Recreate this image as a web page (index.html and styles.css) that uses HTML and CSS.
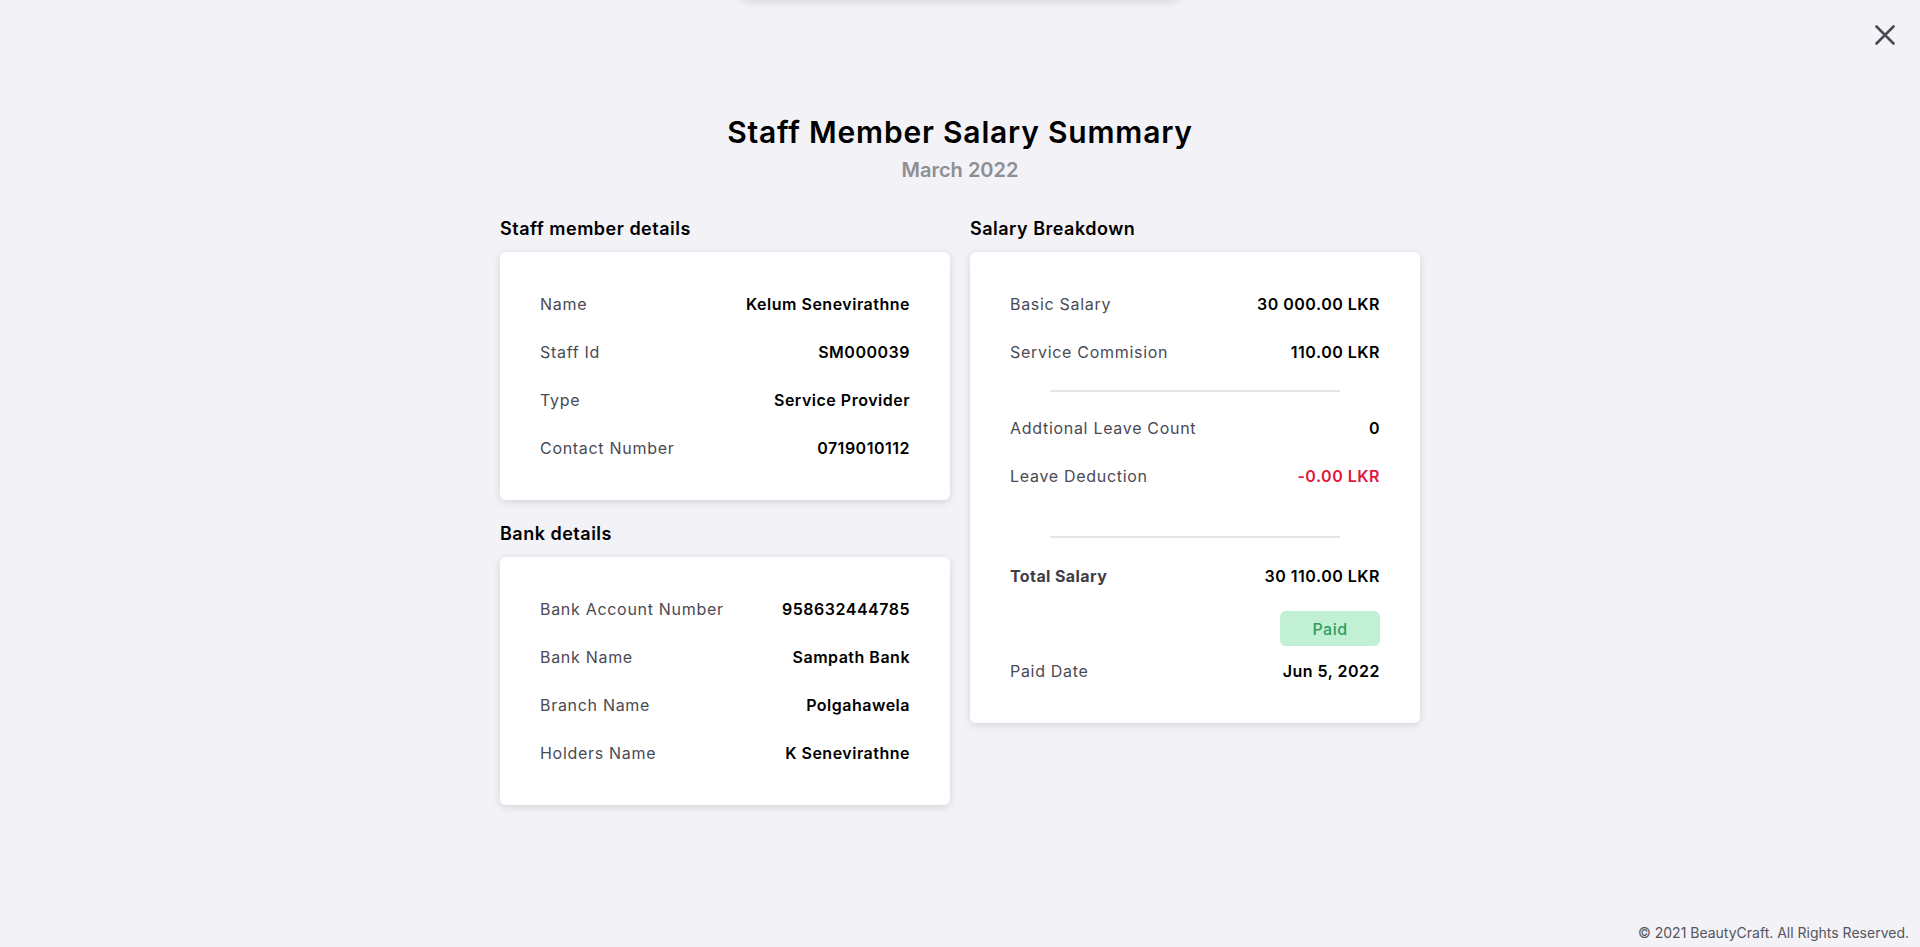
FILE: index.html
```html
<!DOCTYPE html>
<html lang="en">
<head>
<meta charset="utf-8">
<title>Staff Member Salary Summary</title>
<link rel="stylesheet" href="styles.css">
</head>
<body>
<div class="page">
  <div class="toast-shadow"></div>
  <button class="close" aria-label="Close">
    <svg width="20" height="20" viewBox="0 0 20 20"><path d="M1.5 1.5 L18.5 18.5 M18.5 1.5 L1.5 18.5" stroke="#4a4a55" stroke-width="2.6" stroke-linecap="round" fill="none"/></svg>
  </button>
  <main class="main">
    <h1 class="title">Staff Member Salary Summary</h1>
    <div class="subtitle">March 2022</div>
    <div class="columns">
      <div class="col">
        <h2 class="section-title">Staff member details</h2>
        <div class="card">
          <div class="row"><span class="label">Name</span><span class="value">Kelum Senevirathne</span></div>
          <div class="row"><span class="label">Staff Id</span><span class="value">SM000039</span></div>
          <div class="row"><span class="label">Type</span><span class="value">Service Provider</span></div>
          <div class="row"><span class="label">Contact Number</span><span class="value">0719010112</span></div>
        </div>
        <h2 class="section-title section-gap">Bank details</h2>
        <div class="card">
          <div class="row"><span class="label">Bank Account Number</span><span class="value">958632444785</span></div>
          <div class="row"><span class="label">Bank Name</span><span class="value">Sampath Bank</span></div>
          <div class="row"><span class="label">Branch Name</span><span class="value">Polgahawela</span></div>
          <div class="row"><span class="label">Holders Name</span><span class="value">K Senevirathne</span></div>
        </div>
      </div>
      <div class="col">
        <h2 class="section-title">Salary Breakdown</h2>
        <div class="card card-salary">
          <div class="row"><span class="label">Basic Salary</span><span class="value">30 000.00 LKR</span></div>
          <div class="row"><span class="label">Service Commision</span><span class="value">110.00 LKR</span></div>
          <div class="divider divider-1"></div>
          <div class="row row-after-div"><span class="label">Addtional Leave Count</span><span class="value">0</span></div>
          <div class="row"><span class="label">Leave Deduction</span><span class="value negative">-0.00 LKR</span></div>
          <div class="divider divider-2"></div>
          <div class="row row-total"><span class="label label-strong">Total Salary</span><span class="value">30 110.00 LKR</span></div>
          <div class="badge-wrap"><span class="badge">Paid</span></div>
          <div class="row row-paid"><span class="label">Paid Date</span><span class="value">Jun 5, 2022</span></div>
        </div>
      </div>
    </div>
  </main>
  <footer class="footer">© 2021 BeautyCraft. All Rights Reserved.</footer>
</div>
</body>
</html>
```
FILE: styles.css
```css
* { box-sizing: border-box; }
html, body { margin: 0; padding: 0; }
body {
  background: #f2f2f7;
  font-family: "Inter", "Open Sans", sans-serif;
  color: #000;
}
.page {
  position: relative;
  height: 947px;
  overflow: hidden;
  display: flex;
  flex-direction: column;
}
.toast-shadow {
  position: absolute;
  top: -60px;
  left: 740px;
  width: 440px;
  height: 60px;
  background: #f2f2f7;
  border-radius: 8px;
  box-shadow: 0 2px 10px rgba(0, 0, 0, 0.12);
}
.close {
  position: absolute;
  top: 25px;
  right: 25px;
  width: 20px;
  height: 20px;
  padding: 0;
  border: 0;
  background: none;
  cursor: pointer;
}
.close svg { display: block; }
.main {
  flex: 1;
  display: flex;
  flex-direction: column;
  align-items: center;
  padding-top: 110px;
}
.title {
  margin: 0;
  font-size: 30px;
  line-height: 45px;
  font-weight: 600;
  letter-spacing: 0.8px;
  color: #000;
}
.subtitle {
  font-size: 20px;
  line-height: 30px;
  font-weight: 600;
  color: #8e8e93;
}
.columns {
  display: flex;
  gap: 20px;
  margin-top: 30px;
}
.col {
  width: 450px;
  display: flex;
  flex-direction: column;
}
.section-title {
  margin: 0 0 10px;
  font-size: 18px;
  line-height: 27px;
  font-weight: 600;
  letter-spacing: 0.5px;
  color: #000;
}
.section-gap { margin-top: 20px; }
.card {
  background: #fff;
  border-radius: 6px;
  box-shadow: 0 2px 8px rgba(0, 0, 0, 0.13);
  padding: 40px;
  display: flex;
  flex-direction: column;
  gap: 24px;
}
.row {
  display: flex;
  justify-content: space-between;
  align-items: center;
  font-size: 16px;
  line-height: 24px;
}
.label { color: #4a4a55; font-weight: 400; letter-spacing: 0.7px; }
.label-strong { font-weight: 700; color: #3e3e48; letter-spacing: 0.4px; }
.value { color: #000; font-weight: 600; text-align: right; letter-spacing: 0.5px; }
.negative { color: #e2163f; }
.card-salary { gap: 0; }
.card-salary .row + .row { margin-top: 24px; }
.divider {
  height: 2px;
  background: #e6e6ea;
  margin: 0 40px;
}
.divider-1 { margin-top: 26px; }
.card-salary .row-after-div { margin-top: 24px; }
.divider-2 { margin-top: 48px; }
.card-salary .row-total { margin-top: 26px; }
.badge-wrap {
  display: flex;
  justify-content: flex-end;
  margin-top: 23px;
}
.badge {
  width: 100px;
  height: 35px;
  border-radius: 6px;
  background: #c2f0d4;
  color: #2e9d5d;
  font-size: 16px;
  font-weight: 500;
  letter-spacing: 0.5px;
  display: flex;
  align-items: center;
  justify-content: center;
}
.card-salary .row-paid { margin-top: 13px; }
.footer {
  text-align: right;
  font-size: 14px;
  line-height: 21px;
  color: #55555e;
  padding: 0 11px 4px 0;
}
```
